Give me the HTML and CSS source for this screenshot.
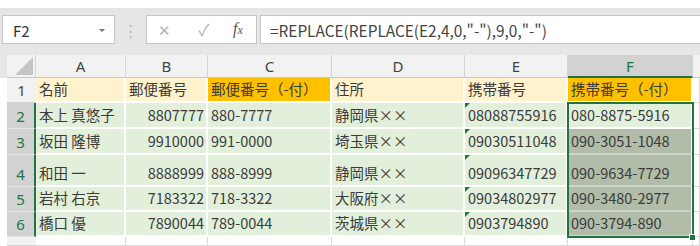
FILE: index.html
```html
<!DOCTYPE html>
<html lang="ja">
<head>
  <meta charset="UTF-8">
  <title>REPLACE</title>
  <link rel="stylesheet" href="styles.css">
</head>
<body>
  <div class="caption"><span class="caption-text">関数</span></div>

  <div class="ribbon">
    <div class="namebox">
      <span>F2</span>
      <span class="caret"></span>
    </div>
    <div class="grip">⋮</div>
    <div class="fxbtns">
      <span class="btn cancel">✕</span>
      <span class="btn enter">✓</span>
      <span class="btn fx"><i>f</i><i class="x">x</i></span>
    </div>
    <div class="formula">=REPLACE(REPLACE(E2,4,0,"-"),9,0,"-")</div>
  </div>

  <div class="sheet">
    <!-- column headings -->
    <div class="pad head"></div>
    <div class="corner"><span class="tri"></span></div>
    <div class="colhead">A</div>
    <div class="colhead">B</div>
    <div class="colhead">C</div>
    <div class="colhead">D</div>
    <div class="colhead">E</div>
    <div class="colhead active">F</div>
    <div class="colhead last"></div>

    <!-- row 1 -->
    <div class="pad"></div>
    <div class="rowhead">1</div>
    <div class="cell hd">名前</div>
    <div class="cell hd">郵便番号</div>
    <div class="cell hd strong">郵便番号（-付）</div>
    <div class="cell hd">住所</div>
    <div class="cell hd">携帯番号</div>
    <div class="cell hd strong">携帯番号（-付）</div>
    <div class="cell empty"></div>

    <!-- row 2 -->
    <div class="pad"></div>
    <div class="rowhead sel">2</div>
    <div class="cell">本上 真悠子</div>
    <div class="cell num">8807777</div>
    <div class="cell">880-7777</div>
    <div class="cell">静岡県××</div>
    <div class="cell flag">08088755916</div>
    <div class="cell">080-8875-5916</div>
    <div class="cell empty"></div>

    <!-- row 3 -->
    <div class="pad"></div>
    <div class="rowhead sel">3</div>
    <div class="cell">坂田 隆博</div>
    <div class="cell num">9910000</div>
    <div class="cell">991-0000</div>
    <div class="cell">埼玉県××</div>
    <div class="cell flag">09030511048</div>
    <div class="cell picked">090-3051-1048</div>
    <div class="cell empty"></div>

    <!-- row 4 -->
    <div class="pad"></div>
    <div class="rowhead sel">4</div>
    <div class="cell">和田 一</div>
    <div class="cell num">8888999</div>
    <div class="cell">888-8999</div>
    <div class="cell">静岡県××</div>
    <div class="cell flag">09096347729</div>
    <div class="cell picked">090-9634-7729</div>
    <div class="cell empty"></div>

    <!-- row 5 -->
    <div class="pad"></div>
    <div class="rowhead sel">5</div>
    <div class="cell">岩村 右京</div>
    <div class="cell num">7183322</div>
    <div class="cell">718-3322</div>
    <div class="cell">大阪府××</div>
    <div class="cell flag">09034802977</div>
    <div class="cell picked">090-3480-2977</div>
    <div class="cell empty"></div>

    <!-- row 6 -->
    <div class="pad"></div>
    <div class="rowhead sel">6</div>
    <div class="cell">橋口 優</div>
    <div class="cell num">7890044</div>
    <div class="cell">789-0044</div>
    <div class="cell">茨城県××</div>
    <div class="cell flag">0903794890</div>
    <div class="cell picked">090-3794-890</div>
    <div class="cell empty"></div>

    <!-- row 7, only its top edge is in view -->
    <div class="pad"></div>
    <div class="rowhead"></div>
    <div class="cell empty"></div>
    <div class="cell empty"></div>
    <div class="cell empty"></div>
    <div class="cell empty"></div>
    <div class="cell empty"></div>
    <div class="cell empty"></div>
    <div class="cell empty"></div>

    <div class="selection"></div>
    <div class="handle"></div>
  </div>
</body>
</html>
```

FILE: styles.css
```css
body {
  margin: 0;
  width: 700px;
  height: 246px;
  overflow: hidden;
  background: #fff;
  font-family: "Noto Sans CJK JP", "Noto Sans", sans-serif;
  color: #3b3b3b;
}

.caption {
  height: 8px;
  overflow: hidden;
  padding-left: 103px;
}

.caption-text {
  display: block;
  margin-top: -18px;
  font-size: 14px;
  line-height: 20px;
  color: #444;
}

/* formula bar */
.ribbon {
  height: 47px;
  box-sizing: border-box;
  background: #e6e6e6;
  display: flex;
  align-items: flex-start;
  padding: 7px 0 0 2px;
}

.namebox {
  width: 113px;
  height: 29px;
  box-sizing: border-box;
  background: #fff;
  border: 1px solid #c6c6c6;
  display: flex;
  align-items: center;
  justify-content: space-between;
  padding: 2px 9px 0 10px;
  font-size: 15px;
  color: #333;
}

.caret {
  width: 0;
  height: 0;
  border-left: 3px solid transparent;
  border-right: 3px solid transparent;
  border-top: 3px solid #777;
}

.grip {
  width: 31px;
  text-align: center;
  color: #b5b5b5;
  font-size: 15px;
  line-height: 29px;
}

.fxbtns {
  width: 111px;
  height: 29px;
  box-sizing: border-box;
  background: #fff;
  border: 1px solid #c6c6c6;
  display: flex;
  align-items: center;
}

.btn {
  text-align: center;
  line-height: 27px;
}

.cancel {
  width: 34px;
  color: #b3b3b3;
  font-size: 15px;
}

.enter {
  width: 46px;
  color: #b3b3b3;
  font-size: 16px;
}

.fx {
  width: 22px;
  color: #555;
  font-family: "Liberation Serif", serif;
  font-size: 16px;
}

.fx .x {
  font-size: 12px;
}

.formula {
  flex: 1;
  height: 29px;
  box-sizing: border-box;
  margin-left: 3px;
  margin-right: -2px;
  background: #fff;
  border: 1px solid #c6c6c6;
  padding: 2px 0 0 9px;
  font-size: 15.4px;
  line-height: 24px;
  color: #444;
  white-space: nowrap;
}

/* sheet grid */
.sheet {
  position: relative;
  display: grid;
  grid-template-columns: 7px 29px 90px 82px 124px 133px 103px 125px 7px;
  grid-template-rows: 23px 25px 26px 26px 32px 25px 25px 9px;
  font-size: 14.5px;
}

.pad.head {
  background: #e6e6e6;
}

.corner {
  position: relative;
  background: #f2f2f2;
  border-right: 1px solid #d4d4d4;
  border-bottom: 1px solid #c8c8c8;
}

.tri {
  position: absolute;
  right: 2px;
  bottom: 2px;
  width: 0;
  height: 0;
  border-left: 18px solid transparent;
  border-bottom: 18px solid #c4c4c4;
}

.colhead {
  background: #f2f2f2;
  border-right: 1px solid #d4d4d4;
  border-bottom: 1px solid #c8c8c8;
  text-align: center;
  font-family: "Noto Sans", sans-serif;
  font-size: 15px;
  line-height: 23px;
  color: #444;
}

.colhead.active {
  background: #d2d2d2;
  border-bottom: 2px solid #217346;
  color: #217346;
}

.colhead.last {
  border-right: 0;
}

.rowhead {
  background: #f2f2f2;
  border-bottom: 1px solid #d4d4d4;
  display: flex;
  align-items: flex-end;
  justify-content: center;
  padding-bottom: 1px;
  font-family: "Noto Sans", sans-serif;
  font-size: 15px;
  line-height: 22px;
  color: #444;
}

.rowhead.sel {
  background: #d2d2d2;
  border-bottom: 1px solid #e4e4e4;
  border-right: 2px solid #217346;
  color: #217346;
}

.cell {
  position: relative;
  box-sizing: border-box;
  background: #e2efda;
  border-right: 2px solid #fff;
  border-bottom: 2px solid #fff;
  display: flex;
  align-items: flex-end;
  padding: 0 3px 2px 3px;
  line-height: 20px;
  white-space: nowrap;
  overflow: hidden;
}

.cell.hd {
  background: #fff2cc;
}

.cell.strong {
  background: #ffc000;
}

.cell.num {
  justify-content: flex-end;
  padding-right: 2px;
}

.cell.picked {
  background: #b1bca9;
  border-bottom-color: #cdd4c9;
}

.cell.flag::before {
  content: "";
  position: absolute;
  left: 0;
  top: 0;
  width: 0;
  height: 0;
  border-top: 5px solid #1e7b34;
  border-right: 5px solid transparent;
}

.cell.empty {
  background: #fff;
  border-right: 1px solid #d9d9d9;
  border-bottom: 1px solid #d9d9d9;
}

/* selection outline over F2:F6 */
.selection {
  position: absolute;
  left: 567px;
  top: 47px;
  width: 127px;
  height: 136px;
  box-sizing: border-box;
  border: 2px solid #217346;
  pointer-events: none;
}

.handle {
  position: absolute;
  left: 689px;
  top: 179px;
  width: 5px;
  height: 5px;
  background: #217346;
  border: 1px solid #fff;
}
```
